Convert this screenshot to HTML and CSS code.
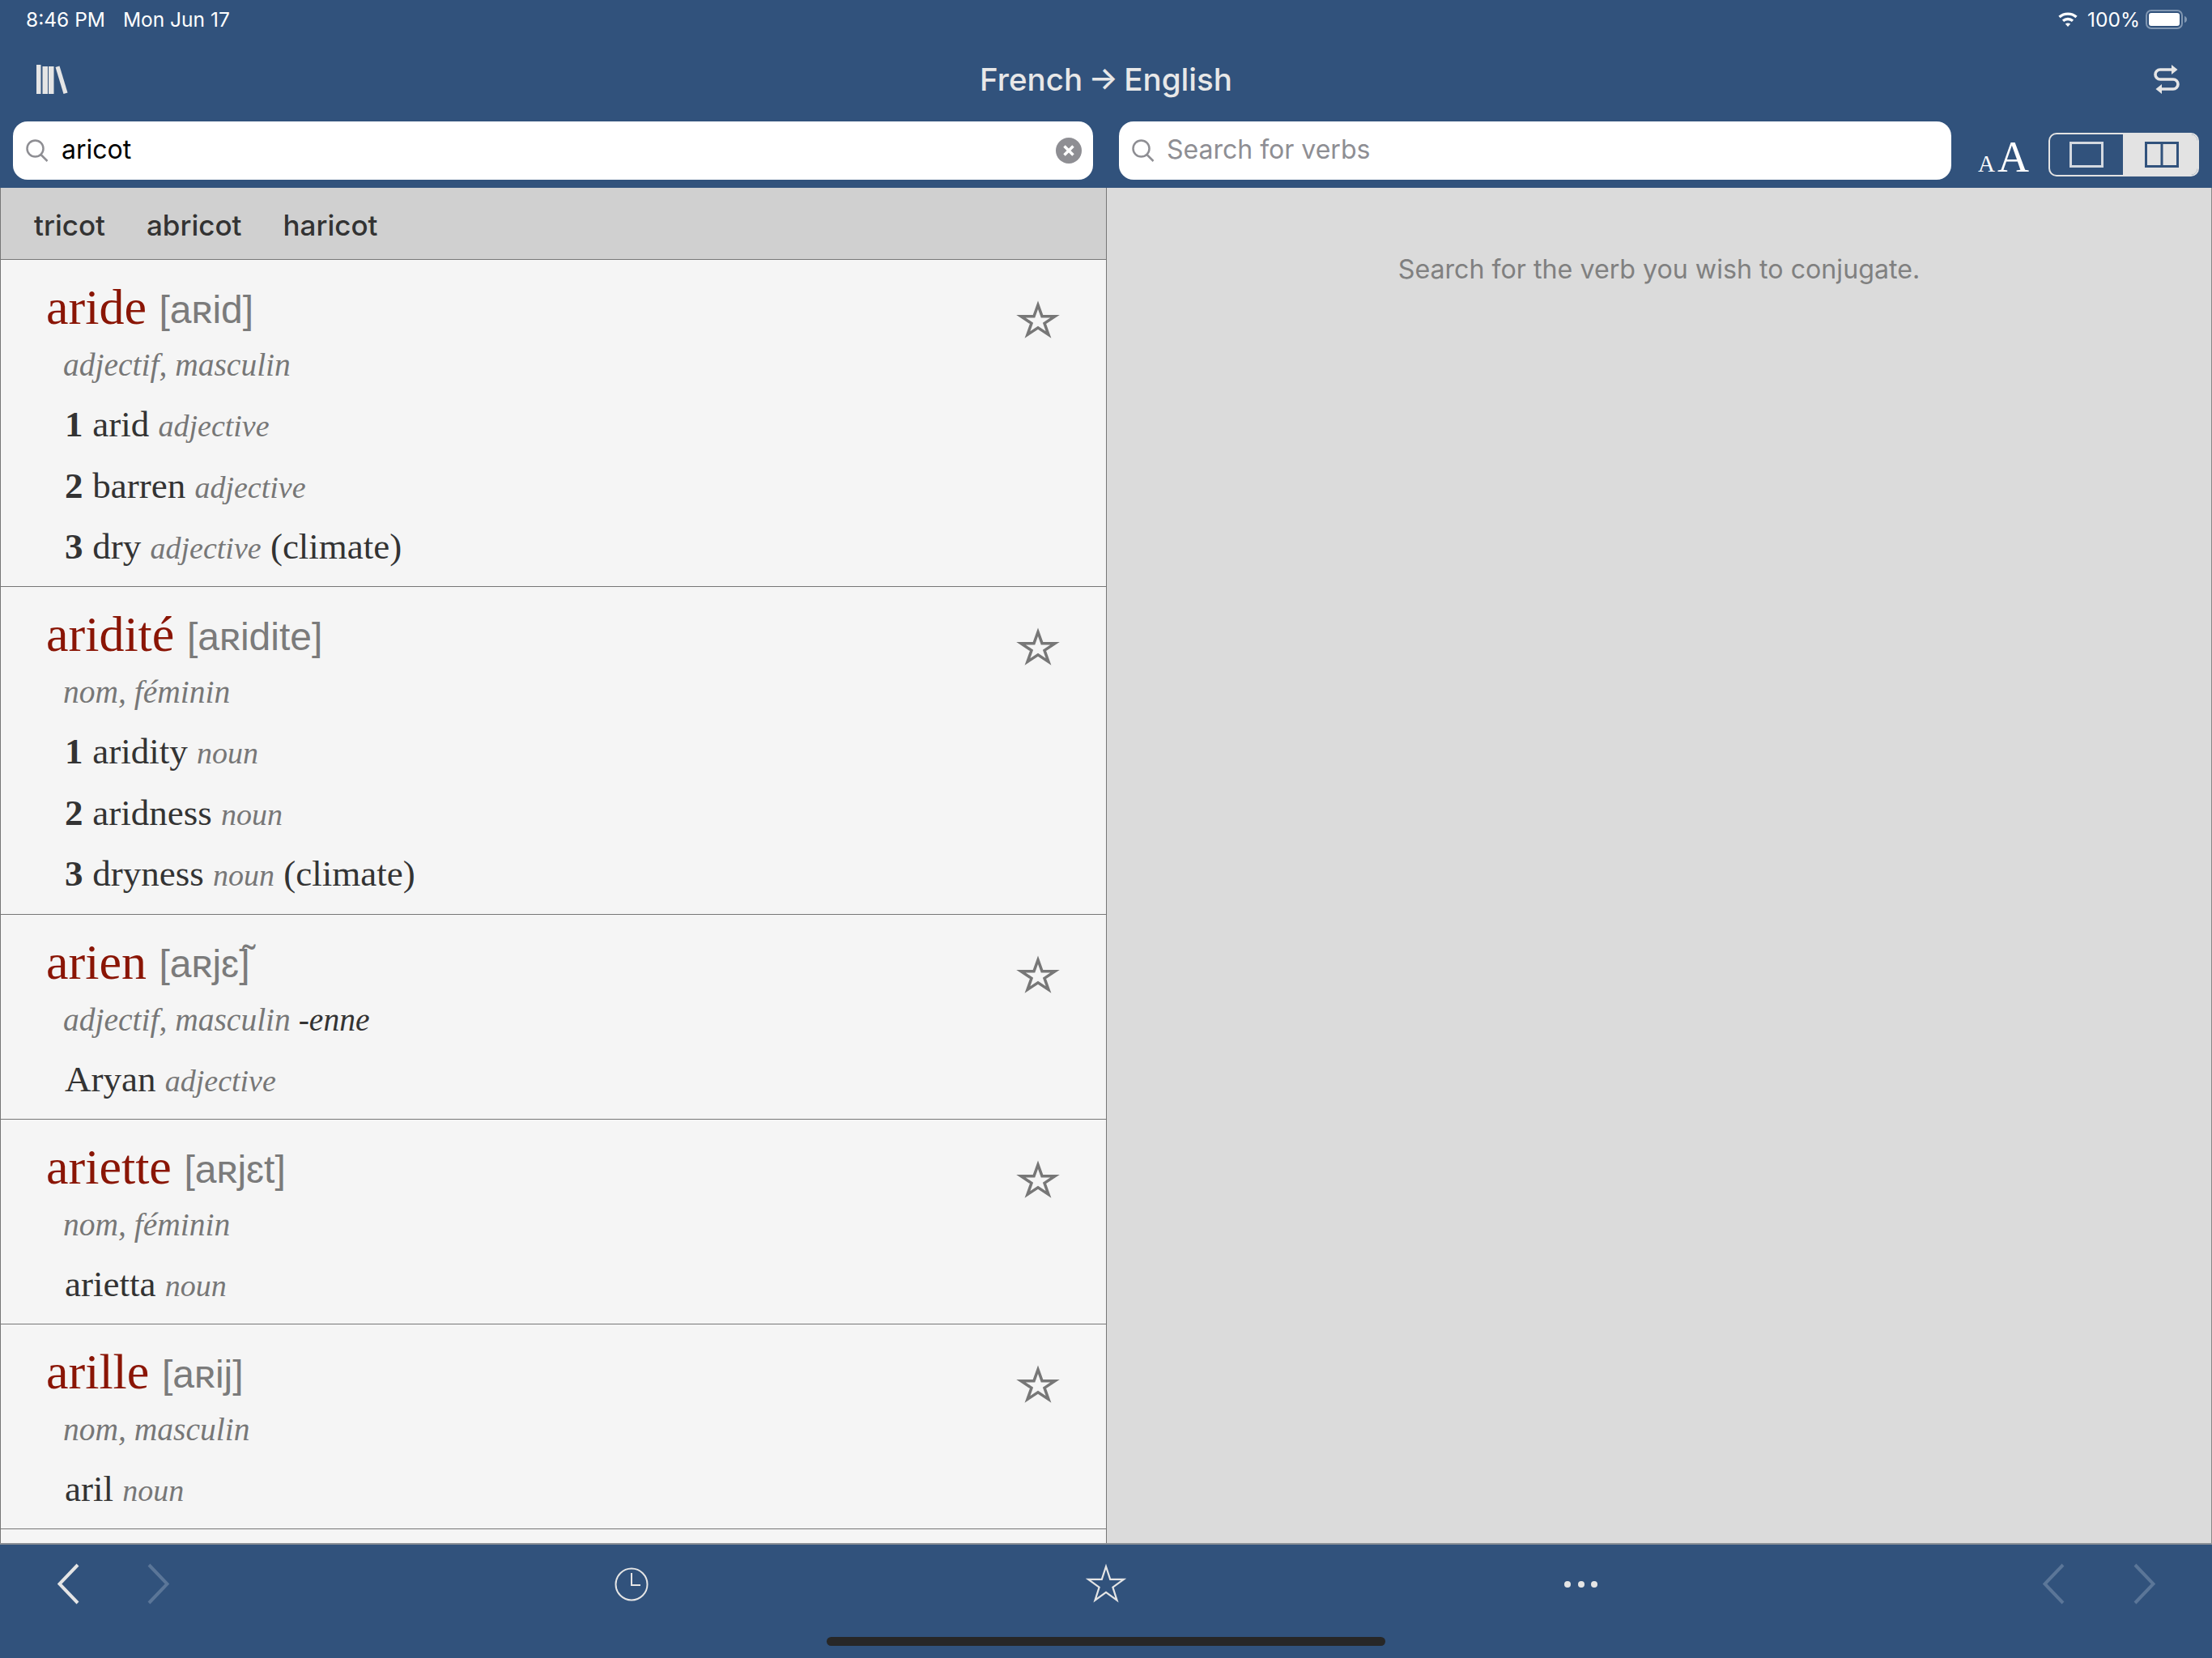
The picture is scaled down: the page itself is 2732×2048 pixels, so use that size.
FILE: index.html
```html
<!DOCTYPE html>
<html lang="fr">
<head>
<meta charset="utf-8">
<title>French → English</title>
<link rel="stylesheet" href="styles.css">
</head>
<body>
<svg class="defs" width="0" height="0" aria-hidden="true">
  <symbol id="star" viewBox="0 0 54 47"><polygon points="27,5.7 32,19.7 48,19.7 35,28.4 40,42.4 27,33.75 14,42.4 19,28.4 6,19.7 22,19.7"/></symbol>
  <symbol id="lens" viewBox="0 0 28 28"><circle cx="11.5" cy="11.5" r="10"/><path d="M18.5 19l8 8"/></symbol>
</svg>
<div class="app">
  <header class="top">
    <div class="status">
      <span class="time">8:46 PM</span>
      <span class="date">Mon Jun 17</span>
      <span class="status-right">
        <svg class="wifi" viewBox="0 0 26 20"><path class="wifi-arc" d="M2.500 7C8.500 1.800 17.500 1.800 23.500 7"/><path class="wifi-arc" d="M7 11.800C10.500 8.800 15.500 8.800 19 11.800"/><path d="M9.800 15.500c1.900-1.500 4.500-1.500 6.400 0L13 19z"/></svg>
        <span class="pct">100%</span>
        <svg class="battery" viewBox="0 0 52 24"><rect class="bat-edge" x="1" y="1" width="44" height="22" rx="6"/><rect class="bat-fill" x="4" y="4" width="38" height="16" rx="3"/><path class="bat-nub" d="M48 8c2 .5 3 2 3 4s-1 3.500-3 4z"/></svg>
      </span>
    </div>
    <div class="nav">
      <svg class="books" viewBox="0 0 39 36"><rect x="0" y="0" width="5.500" height="36"/><rect x="7.500" y="2" width="6.500" height="34"/><rect x="15" y="2" width="6.500" height="34"/><path d="M23.500 3l5-1.500L38.500 34.500l-5 1.500z"/></svg>
      <h1 class="title">French → English</h1>
      <svg class="swap" viewBox="0 0 32 36"><path d="M24 6H8a6 6 0 0 0 0 12H24a6 6 0 0 1 0 12H8"/><path class="head-tip" d="M22 0l7.500 6L22 12z"/><path class="head-tip" d="M10 24l-7.500 6L10 36z"/></svg>
    </div>
    <div class="searches">
      <div class="field field-main">
        <svg class="lens"><use href="#lens"/></svg>
        <span class="query">aricot</span>
        <span class="clear"><svg viewBox="0 0 32 32"><path d="M10.500 10.500l11 11M21.500 10.500l-11 11"/></svg></span>
      </div>
      <div class="field field-verbs">
        <svg class="lens"><use href="#lens"/></svg>
        <span class="placeholder">Search for verbs</span>
      </div>
      <div class="font-size"><span class="a-small">A</span><span class="a-big">A</span></div>
      <div class="segment">
        <span class="seg seg-on"><svg viewBox="0 0 42 32"><rect x="1.500" y="1.500" width="39" height="29"/></svg></span>
        <span class="seg seg-off"><svg viewBox="0 0 42 32"><rect x="1.500" y="1.500" width="39" height="29"/><path d="M21 1.500v29"/></svg></span>
      </div>
    </div>
  </header>

  <main class="panes">
    <section class="left">
      <div class="suggest"><span>tricot</span><span>abricot</span><span>haricot</span></div>
      <article class="entry">
        <div>
          <div class="head"><span class="word">aride</span> <span class="pron">[aʀid]</span></div>
          <div class="gram">adjectif, masculin</div>
          <div class="sense"><b>1</b> arid <i>adjective</i></div>
          <div class="sense"><b>2</b> barren <i>adjective</i></div>
          <div class="sense"><b>3</b> dry <i>adjective</i> (climate)</div>
        </div>
        <svg class="fav"><use href="#star"/></svg>
      </article>
      <article class="entry">
        <div>
          <div class="head"><span class="word">aridité</span> <span class="pron">[aʀidite]</span></div>
          <div class="gram">nom, féminin</div>
          <div class="sense"><b>1</b> aridity <i>noun</i></div>
          <div class="sense"><b>2</b> aridness <i>noun</i></div>
          <div class="sense"><b>3</b> dryness <i>noun</i> (climate)</div>
        </div>
        <svg class="fav"><use href="#star"/></svg>
      </article>
      <article class="entry">
        <div>
          <div class="head"><span class="word">arien</span> <span class="pron">[aʀjɛ<span class="tight">]</span><span class="tilde">˜</span></span></div>
          <div class="gram">adjectif, masculin <span class="fem">-enne</span></div>
          <div class="sense">Aryan <i>adjective</i></div>
        </div>
        <svg class="fav"><use href="#star"/></svg>
      </article>
      <article class="entry">
        <div>
          <div class="head"><span class="word">ariette</span> <span class="pron">[aʀjɛt]</span></div>
          <div class="gram">nom, féminin</div>
          <div class="sense">arietta <i>noun</i></div>
        </div>
        <svg class="fav"><use href="#star"/></svg>
      </article>
      <article class="entry">
        <div>
          <div class="head"><span class="word">arille</span> <span class="pron">[aʀij]</span></div>
          <div class="gram">nom, masculin</div>
          <div class="sense">aril <i>noun</i></div>
        </div>
        <svg class="fav"><use href="#star"/></svg>
      </article>
    </section>
    <section class="right">
      <p class="hint">Search for the verb you wish to conjugate.</p>
    </section>
  </main>

  <footer class="toolbar">
    <div class="tools">
      <svg class="chev"><path d="M25 2L2.500 25.500 25 49"/></svg>
      <svg class="chev dim gap-a"><path d="M2 2l22.500 23.500L2 49"/></svg>
      <svg class="clock gap-b" viewBox="0 0 42 42"><circle cx="21" cy="21" r="19.500"/><path d="M21 7v15h11"/></svg>
      <svg class="bigstar gap-c" viewBox="0 0 52 51"><polygon points="26,4 31.200,19.900 47.900,19.900 34.400,29.700 39.500,45.600 26,35.800 12.500,45.600 17.600,29.700 4.100,19.900 20.800,19.900"/></svg>
      <div class="dots gap-d"><i></i><i></i><i></i></div>
      <svg class="chev dim gap-e"><path d="M25 2L2.500 25.500 25 49"/></svg>
      <svg class="chev dim gap-f"><path d="M2 2l22.500 23.500L2 49"/></svg>
    </div>
    <div class="home"></div>
  </footer>
</div>
</body>
</html>
```
FILE: styles.css
```css
* { box-sizing: border-box; }
html, body { margin: 0; padding: 0; }
body { font-family: Inter, "Liberation Sans", sans-serif; background: #31527c; }
.defs { position: absolute; }
.app { width: 2732px; height: 2048px; display: flex; flex-direction: column; overflow: hidden; }

/* header */
.top { background: #31527c; height: 232px; flex: none; display: flex; flex-direction: column; }
.status { height: 48px; padding: 0 30px 0 32px; display: flex; align-items: center; font-size: 24.500px; color: #fff; }
.date { margin-left: 22px; }
.status-right { margin-left: auto; display: flex; align-items: center; }
.wifi { width: 26px; height: 20px; fill: #fff; }
.wifi-arc { fill: none; stroke: #fff; stroke-width: 3.400; }
.pct { margin-left: 11px; }
.battery { width: 52px; height: 24px; margin-left: 7px; }
.bat-edge { fill: none; stroke: #8197b2; stroke-width: 2; }
.bat-fill { fill: #fff; }
.bat-nub { fill: #8197b2; }
.nav { height: 102px; padding: 0 40px; display: grid; grid-template-columns: 1fr auto 1fr; align-items: center; }
.books { width: 39px; height: 36px; fill: #e5e5e5; margin: -3px 0 0 5px; }
.title { margin: -2px 0 0; font-size: 38.500px; font-weight: 500; word-spacing: -3px; color: #e8e8e8; }
.swap { width: 32px; height: 36px; fill: none; stroke: #e5e5e5; stroke-width: 3.600; justify-self: end; margin-top: -3px; }
.swap .head-tip { fill: #e5e5e5; stroke: none; }
.searches { display: flex; align-items: flex-start; padding-left: 16px; }
.field { height: 72px; background: #fff; border-radius: 18px; display: flex; align-items: center; padding-left: 16px; font-size: 32px; }
.field-main { width: 1334px; }
.field-verbs { width: 1028px; margin-left: 32px; }
.lens { width: 28px; height: 28px; fill: none; stroke: #8e8e93; stroke-width: 2.500; flex: none; }
.query { margin: -3px 0 0 16px; color: #000; }
.placeholder { margin: -3px 0 0 15px; color: #8e8e93; }
.clear { margin-left: auto; margin-right: 14px; width: 32px; height: 32px; border-radius: 50%; background: #8e8e93; display: flex; }
.clear svg { width: 32px; height: 32px; fill: none; stroke: #fff; stroke-width: 3.500; }
.font-size { width: 62px; margin-left: 33px; height: 72px; padding-top: 8px; display: flex; align-items: baseline; font-family: "Liberation Serif", serif; color: #fff; line-height: 72px; }
.a-small { font-size: 29px; margin-right: 3px; }
.a-big { font-size: 54px; }
.segment { width: 186px; height: 54px; margin: 14px 0 0 25px; border: 2px solid #e3e3e3; border-radius: 10px; display: flex; overflow: hidden; }
.seg { width: 90px; flex: none; display: flex; align-items: center; justify-content: center; }
.seg svg { width: 42px; height: 32px; fill: none; stroke-width: 3; }
.seg-on svg { stroke: #d4d9e0; }
.seg-off { width: 92px; padding-left: 4px; background: #e3e3e3; }
.seg-off svg { stroke: #31527c; }

/* panes */
.panes { flex: 1; display: flex; min-height: 0; border-bottom: 2px solid #8a8f96; }
.left { width: 1367px; flex: none; background: #f5f5f5; border-left: 1px solid #777; border-right: 1px solid #777; overflow: hidden; }
.right { flex: 1; background: #dbdbdb; border-right: 1px solid #888; }
.suggest { height: 89px; padding: 3px 0 0 41px; background: #d0d0d0; border-bottom: 1px solid #777; display: flex; align-items: center; gap: 51px; font-size: 35px; font-weight: 500; color: #333; }
.entry { display: flex; justify-content: space-between; align-items: flex-start; padding: 23px 57px 10.800px 56px; border-bottom: 1px solid #777; font-family: "Liberation Serif", serif; }
.head { height: 71px; line-height: 71px; font-size: 62px; white-space: nowrap; }
.word { color: #8a1505; }
.pron { font-family: "Liberation Sans", sans-serif; font-size: 48px; line-height: 0; color: #7b7b7b; vertical-align: 1.500px; }
.tight { letter-spacing: -9px; }
.tilde { line-height: 0; vertical-align: 6px; }
.gram { margin-left: 21px; height: 72px; line-height: 73px; font-size: 39.500px; font-style: italic; color: #777; }
.fem { color: #333; }
.sense { margin-left: 23px; height: 75.500px; line-height: 75px; font-size: 45px; color: #333; white-space: nowrap; }
.sense b { display: inline-block; min-width: 23px; }
.sense i { font-size: 38px; color: #777; }
.fav { width: 54px; height: 47px; margin-top: 27px; fill: none; stroke: #777; stroke-width: 3.500; stroke-miterlimit: 10; overflow: visible; }
.hint { margin: 81px 0 0; text-align: center; font-size: 32.200px; line-height: 40px; color: #808080; }

/* toolbar */
.toolbar { flex: none; height: 140px; background: #31527c; display: flex; flex-direction: column; }
.tools { display: flex; align-items: center; height: 51px; margin-top: 23px; padding-left: 71px; }
.chev { width: 27px; height: 51px; fill: none; stroke: #e5e5e5; stroke-width: 4; flex: none; }
.dim { stroke: #5b7698; }
.gap-a { margin-left: 84px; }
.gap-b { margin-left: 550px; }
.gap-c { margin-left: 539px; }
.gap-d { margin-left: 540px; }
.gap-e { margin-left: 550px; }
.gap-f { margin-left: 85px; }
.clock { width: 42px; height: 42px; fill: none; stroke: #e5e5e5; stroke-width: 2; flex: none; }
.bigstar { width: 52px; height: 51px; fill: none; stroke: #e5e5e5; stroke-width: 2.200; stroke-miterlimit: 10; flex: none; }
.dots { width: 41px; display: flex; justify-content: space-between; flex: none; }
.dots i { width: 8px; height: 8px; border-radius: 50%; background: #e5e5e5; }
.home { width: 690px; height: 11px; margin: 40px auto 0; background: #272727; border-radius: 6px; flex: none; }
```
